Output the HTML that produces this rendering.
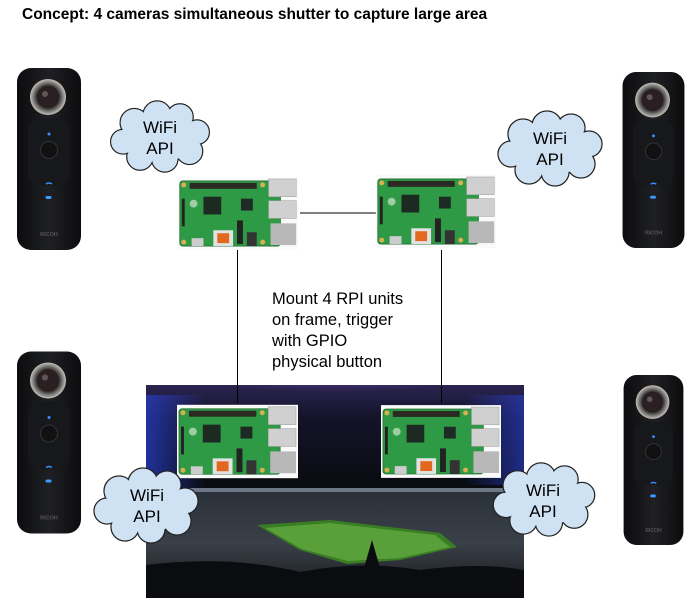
<!DOCTYPE html>
<html><head><meta charset="utf-8"><style>
html,body{margin:0;padding:0;background:#fff;}
body{width:696px;height:614px;position:relative;overflow:hidden;font-family:"Liberation Sans",Arial,sans-serif;}
</style></head><body>
<svg width="696" height="614" viewBox="0 0 696 614" xmlns="http://www.w3.org/2000/svg" style="position:absolute;left:0;top:0">
<defs>
<clipPath id="stc"><rect x="146" y="385" width="378" height="213"/></clipPath>
<radialGradient id="lens" cx="0.5" cy="0.5" r="0.5">
<stop offset="0" stop-color="#4a3a3a"/><stop offset="0.55" stop-color="#1a1212"/><stop offset="0.8" stop-color="#777"/><stop offset="1" stop-color="#c8c2b8"/>
</radialGradient>
<linearGradient id="body" x1="0" x2="1"><stop offset="0" stop-color="#0c0c0e"/><stop offset="0.5" stop-color="#1f2024"/><stop offset="1" stop-color="#0c0c0e"/></linearGradient>
<symbol id="cam" viewBox="0 0 64 182">
<rect x="0" y="0" width="64" height="182" rx="14" fill="url(#body)"/>
<circle cx="31" cy="29" r="18" fill="url(#lens)"/>
<circle cx="31" cy="29" r="10" fill="#2a1f22"/>
<circle cx="28" cy="26" r="3" fill="#8a7a7a" opacity="0.6"/>
<rect x="11" y="50" width="42" height="68" rx="12" fill="#17181b"/>
<circle cx="32" cy="66" r="1.5" fill="#3a8cff"/>
<circle cx="32" cy="82" r="8.5" fill="#111" stroke="#333" stroke-width="1"/>
<path d="M29 116 q3 -2 6 0" stroke="#3a8cff" stroke-width="1.5" fill="none"/>
<rect x="28.5" y="128" width="6" height="3" rx="1.5" fill="#3a9cff"/>
<text x="32" y="168" font-size="5.5" font-weight="bold" fill="#555" text-anchor="middle" font-family="Liberation Sans, sans-serif">RICOH</text>
</symbol>
<symbol id="rpi" viewBox="0 0 122 74">
<rect width="122" height="74" fill="#fafafa"/>
<rect x="2" y="4" width="102" height="66" rx="3" fill="#2f9a45"/>
<rect x="2" y="4" width="102" height="66" rx="3" fill="none" stroke="#1e6e30" stroke-width="0.8"/>
<rect x="12" y="6" width="68" height="6" fill="#2a2a22"/>
<circle cx="6" cy="8" r="2.5" fill="#d8b050"/><circle cx="86" cy="8" r="2.5" fill="#d8b050"/>
<circle cx="6" cy="66" r="2.5" fill="#d8b050"/><circle cx="86" cy="66" r="2.5" fill="#d8b050"/>
<rect x="92" y="2" width="28" height="18" fill="#d0d0d0" stroke="#999" stroke-width="0.5"/>
<rect x="92" y="24" width="28" height="18" fill="#d0d0d0" stroke="#999" stroke-width="0.5"/>
<rect x="94" y="47" width="26" height="22" fill="#b8b8b8"/>
<rect x="26" y="20" width="18" height="18" fill="#1d2a22"/>
<rect x="64" y="22" width="12" height="12" fill="#1e2a24"/>
<circle cx="16" cy="27" r="4" fill="#cde3cf" opacity="0.7"/>
<rect x="4" y="22" width="3" height="28" fill="#222"/>
<rect x="36" y="54" width="20" height="16" fill="#e2e2e2"/>
<rect x="40" y="57" width="12" height="10" fill="#e26820"/>
<rect x="60" y="44" width="6" height="24" fill="#222"/>
<rect x="70" y="56" width="10" height="14" fill="#333"/>
<rect x="14" y="62" width="12" height="8" fill="#ccc"/>
</symbol>
<symbol id="cloud" viewBox="0 0 110 80">
<g fill="#cfe2f3" stroke="#222" stroke-width="1.3">
<circle cx="28" cy="26" r="15"/><circle cx="52" cy="18" r="15"/><circle cx="76" cy="20" r="14"/><circle cx="94" cy="36" r="13"/>
<circle cx="86" cy="56" r="14"/><circle cx="60" cy="64" r="14"/><circle cx="34" cy="62" r="14"/><circle cx="16" cy="46" r="13"/>
</g>
<g fill="#cfe2f3">
<circle cx="28" cy="26" r="14.3"/><circle cx="52" cy="18" r="14.3"/><circle cx="76" cy="20" r="13.3"/><circle cx="94" cy="36" r="12.3"/>
<circle cx="86" cy="56" r="13.3"/><circle cx="60" cy="64" r="13.3"/><circle cx="34" cy="62" r="13.3"/><circle cx="16" cy="46" r="12.3"/>
<ellipse cx="55" cy="41" rx="40" ry="26"/>
</g>
</symbol>
<linearGradient id="sky" x1="0" y1="0" x2="0" y2="1">
<stop offset="0" stop-color="#2a2450"/><stop offset="0.15" stop-color="#14142a"/><stop offset="0.45" stop-color="#0a0c12"/><stop offset="1" stop-color="#0a0c10"/>
</linearGradient>
<radialGradient id="pl" cx="0.5" cy="0" r="0.6"><stop offset="0" stop-color="#a060e0" stop-opacity="0.9"/><stop offset="1" stop-color="#a060e0" stop-opacity="0"/></radialGradient>
<linearGradient id="crowd" x1="0" y1="0" x2="0" y2="1"><stop offset="0" stop-color="#2a3038"/><stop offset="0.5" stop-color="#3a4048"/><stop offset="1" stop-color="#15171a"/></linearGradient>
<linearGradient id="bl" x1="0" x2="1"><stop offset="0" stop-color="#2a40d0" stop-opacity="0.7"/><stop offset="1" stop-color="#2a40d0" stop-opacity="0"/></linearGradient>
<linearGradient id="br" x1="1" x2="0"><stop offset="0" stop-color="#2a40d0" stop-opacity="0.6"/><stop offset="1" stop-color="#2a40d0" stop-opacity="0"/></linearGradient>
</defs>

<text x="22" y="19" font-size="15.5" font-weight="bold" fill="#000">Concept: 4 cameras simultaneous shutter to capture large area</text>

<!-- stadium -->
<g clip-path="url(#stc)">
<rect x="146" y="385" width="378" height="213" fill="url(#sky)"/>
<ellipse cx="335" cy="385" rx="170" ry="35" fill="url(#pl)"/>
<rect x="146" y="395" width="60" height="110" fill="url(#bl)"/>
<rect x="464" y="395" width="60" height="90" fill="url(#br)"/>
<rect x="146" y="488" width="378" height="110" fill="url(#crowd)"/>
<rect x="190" y="488" width="330" height="4" fill="#8a96a8" opacity="0.7"/>
<polygon points="257,525 330,520 440,533 457,547 400,560 347,564 300,550" fill="#3a7e24"/>
<polygon points="265,528 330,523 435,535 450,547 400,558 348,561 302,549" fill="#5aa03a"/>
<path d="M146 565 Q230 555 300 572 Q360 560 420 570 Q480 562 524 570 L524 598 L146 598 Z" fill="#0b0c0f"/>
<path d="M362 575 L372 540 L382 575 Z" fill="#0b0c0f"/>
</g>

<!-- lines -->
<line x1="300" y1="213" x2="376" y2="213" stroke="#000" stroke-width="1"/>
<line x1="237.5" y1="250" x2="237.5" y2="403" stroke="#000" stroke-width="1"/>
<line x1="441.5" y1="250" x2="441.5" y2="403" stroke="#000" stroke-width="1"/>

<!-- rpis -->
<use href="#rpi" x="177" y="177" width="122" height="73"/>
<use href="#rpi" x="375" y="175" width="122" height="73"/>
<use href="#rpi" x="177" y="402" width="121" height="79"/>
<use href="#rpi" x="381" y="402" width="120" height="79"/>

<!-- cameras -->
<use href="#cam" x="17" y="68" width="64" height="182"/>
<use href="#cam" x="622" y="72" width="63" height="176"/>
<use href="#cam" x="17" y="348" width="64" height="189"/>
<use href="#cam" x="622" y="375" width="63" height="170"/>

<!-- clouds -->
<use href="#cloud" x="104" y="98" width="112" height="76"/>
<use href="#cloud" x="494" y="108" width="112" height="80"/>
<use href="#cloud" x="90" y="465" width="112" height="80"/>
<use href="#cloud" x="488" y="460" width="112" height="78"/>
<g font-size="17" fill="#000" text-anchor="middle">
<text x="160" y="133">WiFi</text><text x="160" y="154">API</text>
<text x="550" y="144">WiFi</text><text x="550" y="165">API</text>
<text x="147" y="501">WiFi</text><text x="147" y="522">API</text>
<text x="543" y="496">WiFi</text><text x="543" y="517">API</text>
</g>

<g font-size="16.5" fill="#000">
<text x="272" y="304">Mount 4 RPI units</text>
<text x="272" y="325">on frame, trigger</text>
<text x="272" y="346">with GPIO</text>
<text x="272" y="367">physical button</text>
</g>
</svg>
</body></html>
